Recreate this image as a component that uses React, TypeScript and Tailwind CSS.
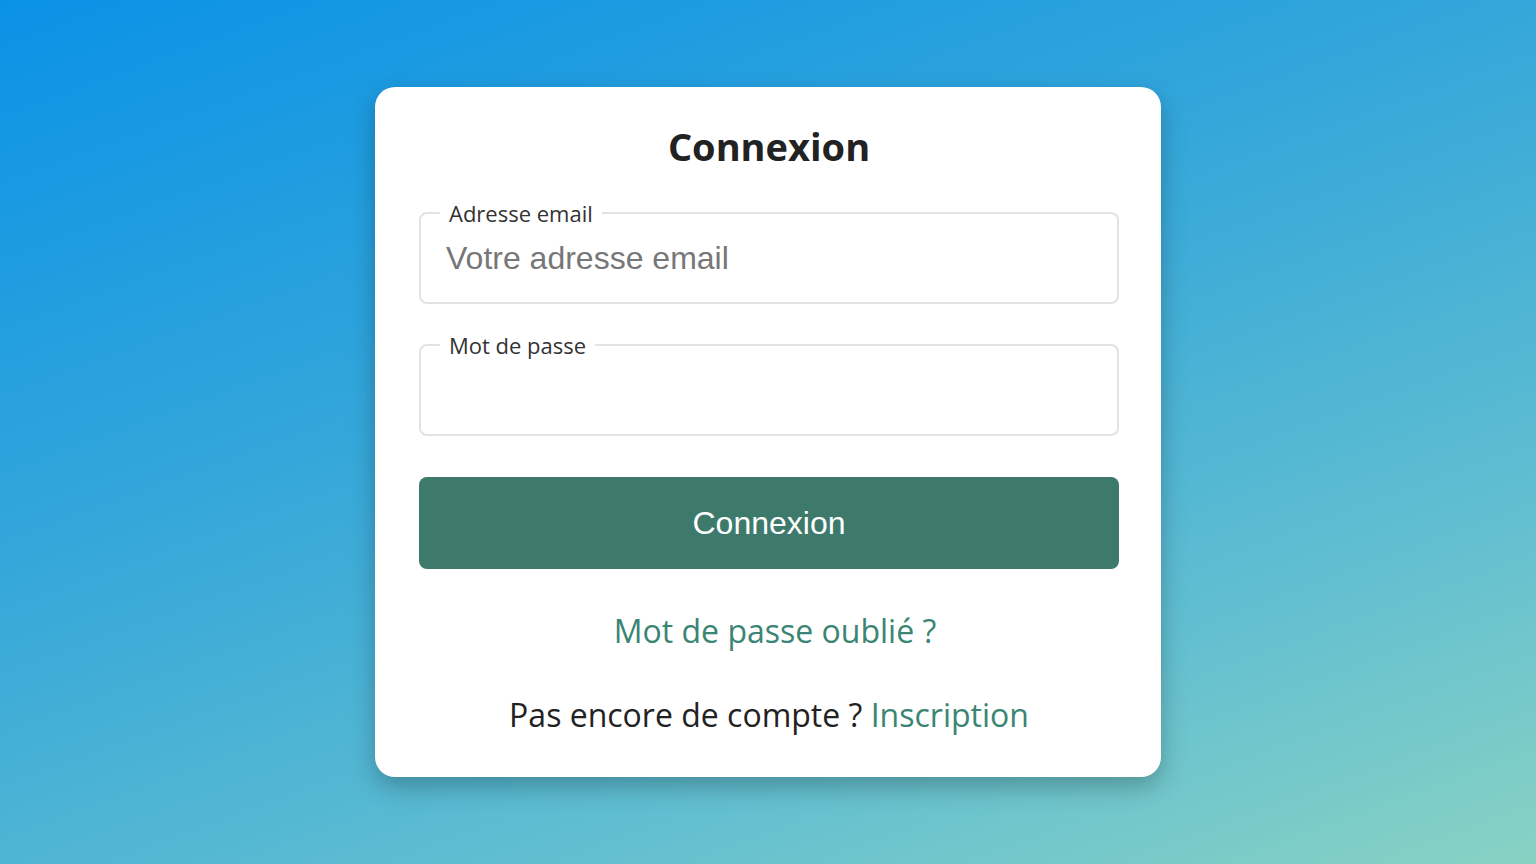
import React from "react";

export default function App() {
  return (
    <div className="min-h-screen w-full bg-[linear-gradient(160deg,#0a92e6_0%,#3aaad8_45%,#62bfd0_75%,#88d2c3_100%)] flex justify-center pt-[87px]" style={{ fontFamily: '"Open Sans", sans-serif' }}>
      <div className="w-[786px] h-[690px] bg-white rounded-[20px] shadow-[0_10px_25px_rgba(0,0,0,0.25)] pl-[44px] pr-[42px] pt-[34px] flex flex-col">
        <h1 className="text-[38px] leading-[50px] font-bold text-[#222] text-center" style={{ fontFamily: '"Open Sans", sans-serif' }}>Connexion</h1>

        <fieldset className="mt-[29px] border-2 border-[#e2e2e2] rounded-[8px] h-[104px] flex flex-col">
          <legend className="ml-[19px] px-[9px] text-[22px] leading-[26px] text-[#333]">Adresse email</legend>
          <input
            type="email"
            placeholder="Votre adresse email"
            className="h-[64px] pl-[25px] text-[32px] outline-none bg-transparent placeholder:text-[#777] text-[#333]"
            style={{ fontFamily: '"Liberation Sans", Arial, sans-serif' }}
          />
        </fieldset>

        <fieldset className="mt-[28px] border-2 border-[#e2e2e2] rounded-[8px] h-[104px] flex flex-col">
          <legend className="ml-[19px] px-[9px] text-[22px] leading-[26px] text-[#333]">Mot de passe</legend>
          <input
            type="password"
            className="h-[64px] pl-[25px] text-[32px] outline-none bg-transparent"
            style={{ fontFamily: '"Liberation Sans", Arial, sans-serif' }}
          />
        </fieldset>

        <button
          className="mt-[41px] h-[92px] w-full rounded-[8px] bg-[#3d7a6b] text-white text-[32px]"
          style={{ fontFamily: '"Liberation Sans", Arial, sans-serif' }}
        >
          Connexion
        </button>

        <a className="mt-[41px] pl-[12px] text-center text-[32px] leading-[41px] text-[#3a8573] cursor-pointer">Mot de passe oublié ?</a>

        <p className="mt-[43px] text-center text-[32px] leading-[41px] text-[#222]">
          Pas encore de compte ? <a className="text-[#3a8573] cursor-pointer">Inscription</a>
        </p>
      </div>
    </div>
  );
}
